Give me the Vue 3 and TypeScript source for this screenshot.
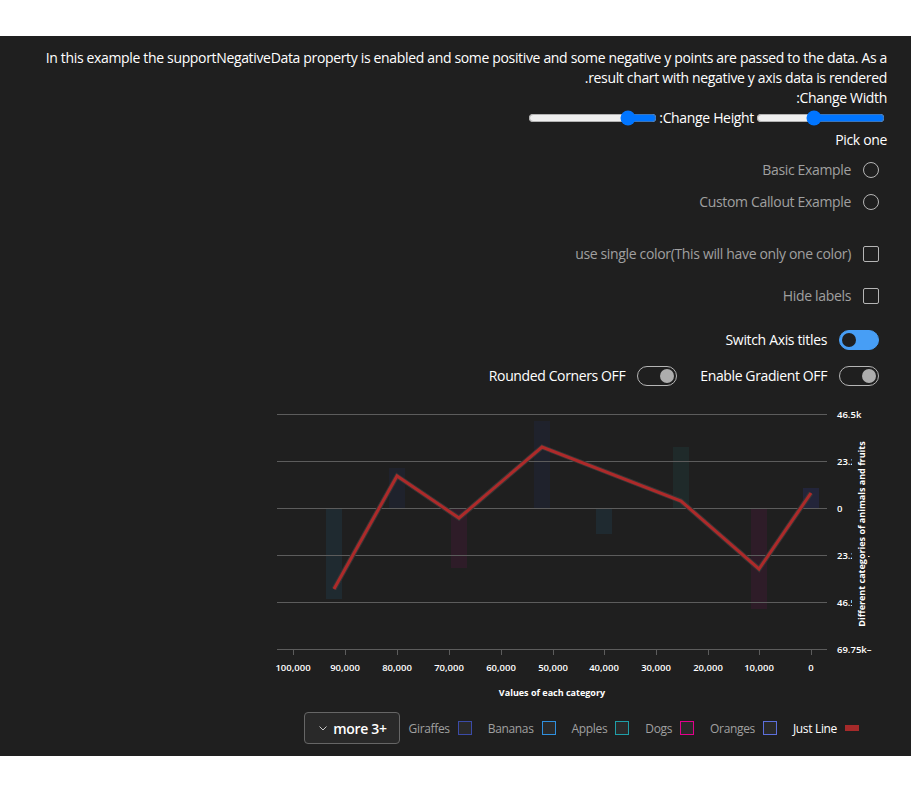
<script setup lang="ts">
const yTicks = [
  { y: 414, label: '46.5k' },
  { y: 461, label: '23.25k' },
  { y: 508, label: '0' },
  { y: 555, label: '23.25k-' },
  { y: 602, label: '46.5k-' },
];

const gridLines = [414, 461, 508, 555, 602];

const xTicks = [
  { x: 293, label: '100,000' },
  { x: 345, label: '90,000' },
  { x: 397, label: '80,000' },
  { x: 449, label: '70,000' },
  { x: 501, label: '60,000' },
  { x: 553, label: '50,000' },
  { x: 604, label: '40,000' },
  { x: 656, label: '30,000' },
  { x: 708, label: '20,000' },
  { x: 759, label: '10,000' },
  { x: 811, label: '0' },
];

const bars = [
  { x: 326, y: 508, h: 91, fill: '#1f2a30' },
  { x: 389, y: 468, h: 40, fill: '#1f222c' },
  { x: 451, y: 508, h: 60, fill: '#2e1c28' },
  { x: 534, y: 421, h: 87, fill: '#1f222c' },
  { x: 596, y: 508, h: 26, fill: '#1f2a30' },
  { x: 673, y: 447, h: 61, fill: '#1f2a2a' },
  { x: 751, y: 508, h: 101, fill: '#2e1c28' },
  { x: 803, y: 488, h: 20, fill: '#23253a' },
];

const linePoints = '334,589 397,476 459,518 542,447 681,501 759,569 811,493';

const legend = [
  { label: 'Just Line', color: '#a52a2a', isLine: true },
  { label: 'Oranges', color: '#5c6fdc', isLine: false },
  { label: 'Dogs', color: '#e3008c', isLine: false },
  { label: 'Apples', color: '#1f9ea8', isLine: false },
  { label: 'Bananas', color: '#2f8fdd', isLine: false },
  { label: 'Giraffes', color: '#3b4ba8', isLine: false },
];
</script>

<template>
  <div class="page" dir="rtl">
    <div class="panel">
      <p class="intro">
        In this example the supportNegativeData property is enabled and some positive and some
        negative y points are passed to the data. As a result chart with negative y axis data is
        rendered.
      </p>
      <label class="line">Change Width:</label>
      <div class="slider-row">
        <input class="slider" type="range" min="0" max="100" value="56" />
        <label>Change Height:</label>
        <input class="slider" type="range" min="0" max="100" value="19" />
      </div>

      <div class="line pick">Pick one</div>
      <div class="options">
        <div class="option">
          <span class="radio"></span>
          <span class="muted">Basic Example</span>
        </div>
        <div class="option">
          <span class="radio"></span>
          <span class="muted">Custom Callout Example</span>
        </div>
        <div class="option first-check">
          <span class="checkbox"></span>
          <span class="muted">use single color(This will have only one color)</span>
        </div>
        <div class="option second-check">
          <span class="checkbox"></span>
          <span class="muted">Hide labels</span>
        </div>
        <div class="option switch-row">
          <span class="toggle on"><span class="knob"></span></span>
          <span>Switch Axis titles</span>
        </div>
        <div class="option toggle-pair">
          <div class="toggle-item">
            <span class="toggle"><span class="knob"></span></span>
            <span>Enable Gradient OFF</span>
          </div>
          <div class="toggle-item">
            <span class="toggle"><span class="knob"></span></span>
            <span>Rounded Corners OFF</span>
          </div>
        </div>
      </div>

      <svg class="chart" width="617" height="300" viewBox="270 400 617 300">
        <rect
          v-for="bar in bars"
          :key="bar.x"
          :x="bar.x"
          :y="bar.y"
          width="16"
          :height="bar.h"
          :fill="bar.fill"
        />
        <line
          v-for="y in gridLines"
          :key="y"
          x1="277"
          x2="827"
          :y1="y + 0.5"
          :y2="y + 0.5"
          stroke="#5c5c5c"
        />
        <line x1="277" x2="827" y1="649.5" y2="649.5" stroke="#5c5c5c" />
        <g v-for="tick in xTicks" :key="tick.x">
          <line :x1="tick.x + 0.5" :x2="tick.x + 0.5" y1="649" y2="655" stroke="#5c5c5c" />
          <text class="tick" :x="tick.x" y="671" text-anchor="middle">{{ tick.label }}</text>
        </g>
        <text v-for="tick in yTicks" :key="tick.y" class="tick" x="837" :y="tick.y + 4">
          {{ tick.label }}
        </text>
        <text class="tick" x="837" y="653">69.75k–</text>

        <polyline :points="linePoints" fill="none" stroke="#363636" stroke-width="5" />
        <polyline :points="linePoints" fill="none" stroke="#ad2a2a" stroke-width="3" />

        <!-- axis title sits on its own background and cuts the tick labels -->
        <rect x="852" y="440" width="16" height="190" fill="#1f1f1f" />
        <text class="axis-title" transform="translate(865 534) rotate(-90)" text-anchor="middle">
          Different categories of animals and fruits
        </text>
        <text class="axis-title" x="552" y="696" text-anchor="middle">Values of each category</text>
      </svg>

      <div class="legend">
        <div v-for="item in legend" :key="item.label" class="legend-item">
          <span
            v-if="item.isLine"
            class="legend-line"
            :style="{ background: item.color }"
          ></span>
          <span v-else class="legend-box" :style="{ borderColor: item.color }"></span>
          <span class="legend-text" :class="{ active: item.isLine }">{{ item.label }}</span>
        </div>
        <button class="more" type="button">
          <span class="more-text" dir="ltr">more 3+</span>
          <svg width="8" height="5" viewBox="0 0 8 5">
            <path d="M0.5 0.5 L4 4 L7.5 0.5" fill="none" stroke="#c8c8c8" stroke-width="1" />
          </svg>
        </button>
      </div>
    </div>
  </div>
</template>

<style scoped>
.page {
  padding: 36px 0 37px;
  font-family: 'Open Sans', 'Liberation Sans', sans-serif;
  font-size: 14px;
  line-height: 20px;
  letter-spacing: -0.34px;
  color: #fff;
}

.panel {
  background: #1f1f1f;
  padding: 12px 24px 12px 0;
  height: 720px;
  box-sizing: border-box;
}

.intro {
  margin: 0;
  padding-left: 24px;
}

.line {
  display: block;
}

.slider-row {
  display: flex;
  align-items: center;
  height: 20px;
  margin-bottom: 2px;
}

.slider {
  width: 129px;
  margin: 2px;
}

.options {
  display: flex;
  flex-direction: column;
  padding: 4px 8px 0 0;
}

.option {
  display: flex;
  align-items: center;
  gap: 12px;
  height: 32px;
}

.muted {
  color: #a0a0a0;
}

.radio {
  width: 16px;
  height: 16px;
  box-sizing: border-box;
  border: 1px solid #b5b5b5;
  border-radius: 50%;
}

.checkbox {
  width: 16px;
  height: 16px;
  box-sizing: border-box;
  border: 1px solid #b5b5b5;
  border-radius: 2px;
}

.first-check {
  margin-top: 20px;
}

.second-check {
  margin-top: 10px;
}

.switch-row {
  margin-top: 12px;
}

.toggle-pair {
  margin-top: 4px;
  gap: 23px;
  letter-spacing: -0.38px;
}

.toggle-item {
  display: flex;
  align-items: center;
  gap: 12px;
}

.toggle {
  display: flex;
  align-items: center;
  width: 40px;
  height: 20px;
  box-sizing: border-box;
  border: 1px solid #b5b5b5;
  border-radius: 10px;
  padding: 0 2px;
}

.knob {
  width: 14px;
  height: 14px;
  border-radius: 50%;
  background: #adadad;
}

.toggle.on {
  background: #479ef5;
  border-color: #479ef5;
  justify-content: flex-end;
}

.toggle.on .knob {
  background: #1f1f1f;
}

.chart {
  display: block;
  margin-top: 8px;
  direction: ltr;
}

.tick {
  font-size: 9.5px;
  font-weight: 600;
  letter-spacing: 0;
  fill: #fff;
}

.axis-title {
  font-size: 9px;
  font-weight: 700;
  letter-spacing: 0;
  fill: #fff;
}

.legend {
  display: flex;
  align-items: center;
  gap: 16px;
  height: 32px;
  margin-top: 12px;
  padding-right: 28px;
}

.legend-item {
  display: flex;
  align-items: center;
  gap: 8px;
  font-size: 12px;
}

.legend-text {
  color: #a0a0a0;
  padding-top: 2px;
}

.legend-text.active {
  color: #fff;
}

.legend-box {
  width: 14px;
  height: 14px;
  box-sizing: border-box;
  border: 1px solid;
  background: #2a2a2a;
}

.legend-line {
  width: 14px;
  height: 6px;
}

.more {
  display: flex;
  align-items: center;
  justify-content: space-between;
  height: 32px;
  width: 96px;
  box-sizing: border-box;
  margin-right: -7px;
  padding: 0 12px 0 14px;
  background: #292929;
  border: 1px solid #666;
  border-radius: 4px;
  color: #fff;
  font-family: inherit;
  letter-spacing: inherit;
}

.more-text {
  font-size: 14px;
  font-weight: 600;
  white-space: nowrap;
}
</style>

<style>
html,
body {
  background: #fff;
}
</style>
